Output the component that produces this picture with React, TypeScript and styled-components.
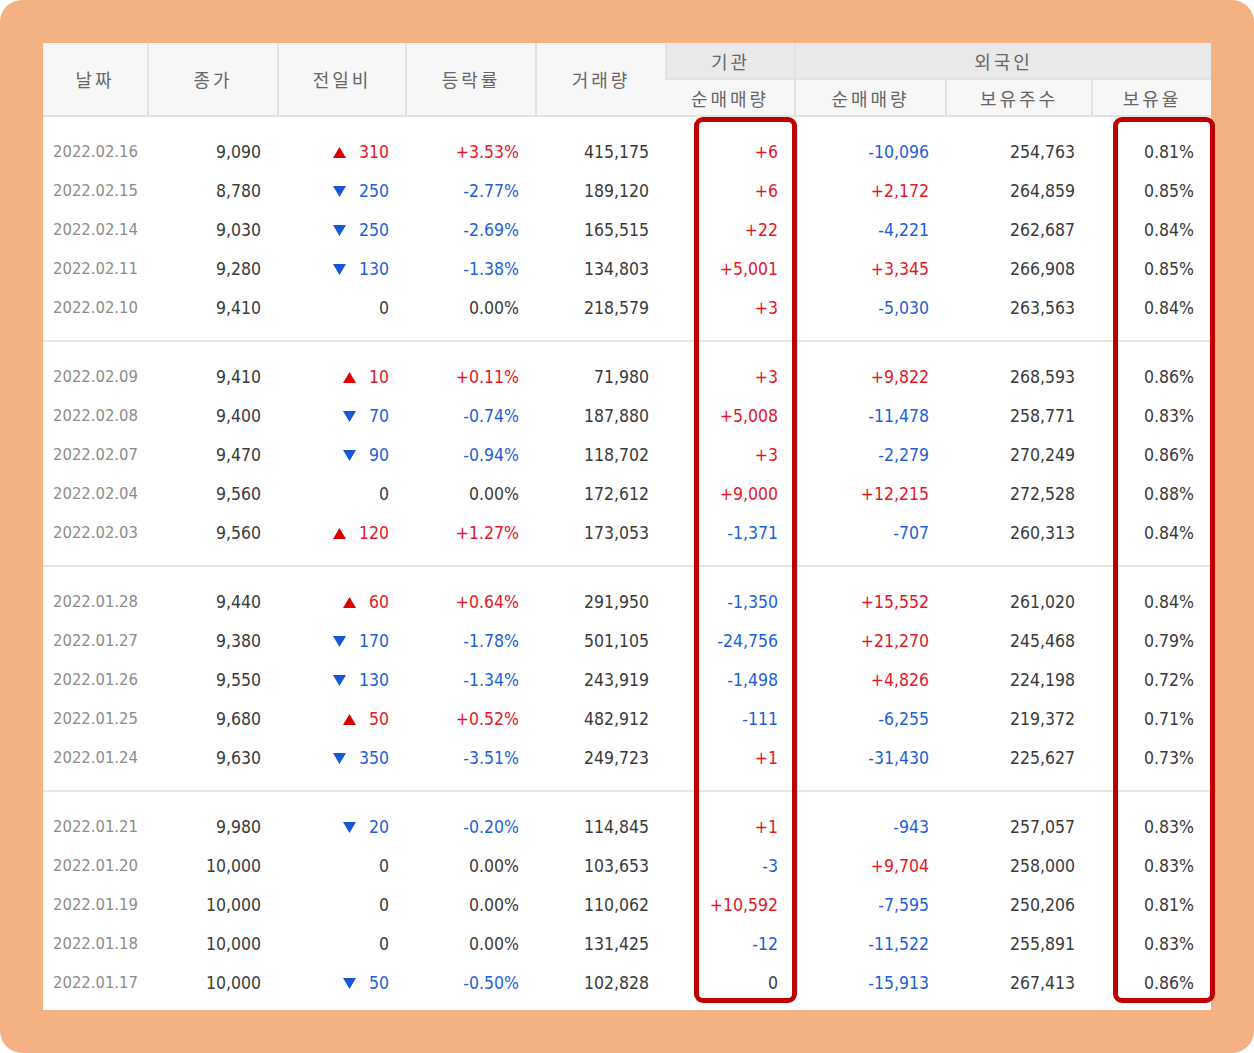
import React from 'react'
import styled, { createGlobalStyle } from 'styled-components'

type Dir = 'up' | 'down' | 'flat'

interface Row {
  date: string
  close: string
  diff: string
  dir: Dir
  rate: string
  volume: string
  inst: string
  frgn: string
  holdQty: string
  holdRate: string
}

const r = (
  date: string,
  close: string,
  dir: Dir,
  diff: string,
  rate: string,
  volume: string,
  inst: string,
  frgn: string,
  holdQty: string,
  holdRate: string,
): Row => ({ date, close, dir, diff, rate, volume, inst, frgn, holdQty, holdRate })

const groups: Row[][] = [
  [
    r('2022.02.16', '9,090', 'up', '310', '+3.53%', '415,175', '+6', '-10,096', '254,763', '0.81%'),
    r('2022.02.15', '8,780', 'down', '250', '-2.77%', '189,120', '+6', '+2,172', '264,859', '0.85%'),
    r('2022.02.14', '9,030', 'down', '250', '-2.69%', '165,515', '+22', '-4,221', '262,687', '0.84%'),
    r('2022.02.11', '9,280', 'down', '130', '-1.38%', '134,803', '+5,001', '+3,345', '266,908', '0.85%'),
    r('2022.02.10', '9,410', 'flat', '0', '0.00%', '218,579', '+3', '-5,030', '263,563', '0.84%'),
  ],
  [
    r('2022.02.09', '9,410', 'up', '10', '+0.11%', '71,980', '+3', '+9,822', '268,593', '0.86%'),
    r('2022.02.08', '9,400', 'down', '70', '-0.74%', '187,880', '+5,008', '-11,478', '258,771', '0.83%'),
    r('2022.02.07', '9,470', 'down', '90', '-0.94%', '118,702', '+3', '-2,279', '270,249', '0.86%'),
    r('2022.02.04', '9,560', 'flat', '0', '0.00%', '172,612', '+9,000', '+12,215', '272,528', '0.88%'),
    r('2022.02.03', '9,560', 'up', '120', '+1.27%', '173,053', '-1,371', '-707', '260,313', '0.84%'),
  ],
  [
    r('2022.01.28', '9,440', 'up', '60', '+0.64%', '291,950', '-1,350', '+15,552', '261,020', '0.84%'),
    r('2022.01.27', '9,380', 'down', '170', '-1.78%', '501,105', '-24,756', '+21,270', '245,468', '0.79%'),
    r('2022.01.26', '9,550', 'down', '130', '-1.34%', '243,919', '-1,498', '+4,826', '224,198', '0.72%'),
    r('2022.01.25', '9,680', 'up', '50', '+0.52%', '482,912', '-111', '-6,255', '219,372', '0.71%'),
    r('2022.01.24', '9,630', 'down', '350', '-3.51%', '249,723', '+1', '-31,430', '225,627', '0.73%'),
  ],
  [
    r('2022.01.21', '9,980', 'down', '20', '-0.20%', '114,845', '+1', '-943', '257,057', '0.83%'),
    r('2022.01.20', '10,000', 'flat', '0', '0.00%', '103,653', '-3', '+9,704', '258,000', '0.83%'),
    r('2022.01.19', '10,000', 'flat', '0', '0.00%', '110,062', '+10,592', '-7,595', '250,206', '0.81%'),
    r('2022.01.18', '10,000', 'flat', '0', '0.00%', '131,425', '-12', '-11,522', '255,891', '0.83%'),
    r('2022.01.17', '10,000', 'down', '50', '-0.50%', '102,828', '0', '-15,913', '267,413', '0.86%'),
  ],
]

const colWidths = [105, 130, 128, 130, 130, 129, 151, 146, 119]

const RED = '#e5161f'
const BLUE = '#1c5fdb'

type Tone = 'up' | 'down' | 'plain'

const toneOf = (v: string): Tone => (v.startsWith('+') ? 'up' : v.startsWith('-') ? 'down' : 'plain')

const GlobalStyle = createGlobalStyle`
  html, body {
    margin: 0;
    padding: 0;
    background: #ffffff;
  }
`

const Frame = styled.div`
  width: 1254px;
  height: 1053px;
  box-sizing: border-box;
  padding: 43px;
  background: #f4b183;
  border-radius: 22px;
`

const Board = styled.div`
  position: relative;
  width: 1168px;
  height: 967px;
  background: #ffffff;
`

const Table = styled.table`
  width: 1168px;
  table-layout: fixed;
  border-collapse: collapse;
  border-spacing: 0;
`

const HeadCell = styled.th<{ $group?: boolean }>`
  height: 35px;
  padding: 0;
  background: ${({ $group }) => ($group ? '#e9e9e9' : '#f7f7f7')};
  border-left: 2px solid #e2e2e2;
  border-bottom: 2px solid #e2e2e2;
  color: #666666;
  font-family: 'Noto Sans CJK KR', 'Noto Sans', sans-serif;
  font-size: 18px;
  font-weight: 400;
  letter-spacing: 3px;
  text-align: center;
  vertical-align: middle;

  &:first-child {
    border-left: none;
  }
`

const Group = styled.tbody`
  & + & {
    border-top: 2px solid #e6e6e6;
  }

  & > tr:first-child > td {
    padding-top: 15px;
  }

  & > tr:last-child > td {
    padding-bottom: 13px;
  }

  &:last-child > tr:last-child > td {
    padding-bottom: 10px;
  }
`

const Cell = styled.td<{ $tone?: Tone }>`
  height: 39px;
  padding: 0 17px 0 0;
  color: ${({ $tone }) => ($tone === 'up' ? RED : $tone === 'down' ? BLUE : '#3a3a3a')};
  font-family: 'DejaVu Sans Condensed', 'Liberation Sans', sans-serif;
  font-size: 17.5px;
  text-align: right;
  vertical-align: middle;
  white-space: nowrap;
`

const DateCell = styled(Cell)`
  padding: 0 0 0 10px;
  color: #8c8c8c;
  font-size: 16.5px;
  text-align: left;
`

const Arrow = styled.svg`
  display: inline-block;
  width: 13px;
  height: 11px;
  margin-right: 13px;
  vertical-align: 0;
`

const Highlight = styled.div<{ $left: number; $width: number }>`
  position: absolute;
  top: 74px;
  left: ${({ $left }) => $left}px;
  width: ${({ $width }) => $width}px;
  height: 886px;
  box-sizing: border-box;
  border: 5px solid #c00000;
  border-radius: 9px;
  pointer-events: none;
`

const Change: React.FC<{ dir: Dir; value: string }> = ({ dir, value }) => (
  <Cell $tone={dir === 'up' ? 'up' : dir === 'down' ? 'down' : 'plain'}>
    {dir !== 'flat' && (
      <Arrow viewBox="0 0 13 11">
        {dir === 'up' ? (
          <polygon points="6.5,0 13,11 0,11" fill="#d90000" />
        ) : (
          <polygon points="0,0 13,0 6.5,11" fill="#1557d4" />
        )}
      </Arrow>
    )}
    {value}
  </Cell>
)

export default function App() {
  return (
    <>
      <GlobalStyle />
      <Frame>
        <Board>
          <Table>
            <colgroup>
              {colWidths.map((w, i) => (
                <col key={i} style={{ width: w }} />
              ))}
            </colgroup>
            <thead>
              <tr>
                <HeadCell rowSpan={2}>날짜</HeadCell>
                <HeadCell rowSpan={2}>종가</HeadCell>
                <HeadCell rowSpan={2}>전일비</HeadCell>
                <HeadCell rowSpan={2}>등락률</HeadCell>
                <HeadCell rowSpan={2}>거래량</HeadCell>
                <HeadCell $group>기관</HeadCell>
                <HeadCell $group colSpan={3}>
                  외국인
                </HeadCell>
              </tr>
              <tr>
                <HeadCell>순매매량</HeadCell>
                <HeadCell>순매매량</HeadCell>
                <HeadCell>보유주수</HeadCell>
                <HeadCell>보유율</HeadCell>
              </tr>
            </thead>
            {groups.map((rows, gi) => (
              <Group key={gi}>
                {rows.map((row) => (
                  <tr key={row.date}>
                    <DateCell>{row.date}</DateCell>
                    <Cell>{row.close}</Cell>
                    <Change dir={row.dir} value={row.diff} />
                    <Cell $tone={toneOf(row.rate)}>{row.rate}</Cell>
                    <Cell>{row.volume}</Cell>
                    <Cell $tone={toneOf(row.inst)}>{row.inst}</Cell>
                    <Cell $tone={toneOf(row.frgn)}>{row.frgn}</Cell>
                    <Cell>{row.holdQty}</Cell>
                    <Cell>{row.holdRate}</Cell>
                  </tr>
                ))}
              </Group>
            ))}
          </Table>
          <Highlight $left={651} $width={103} />
          <Highlight $left={1070} $width={102} />
        </Board>
      </Frame>
    </>
  )
}
